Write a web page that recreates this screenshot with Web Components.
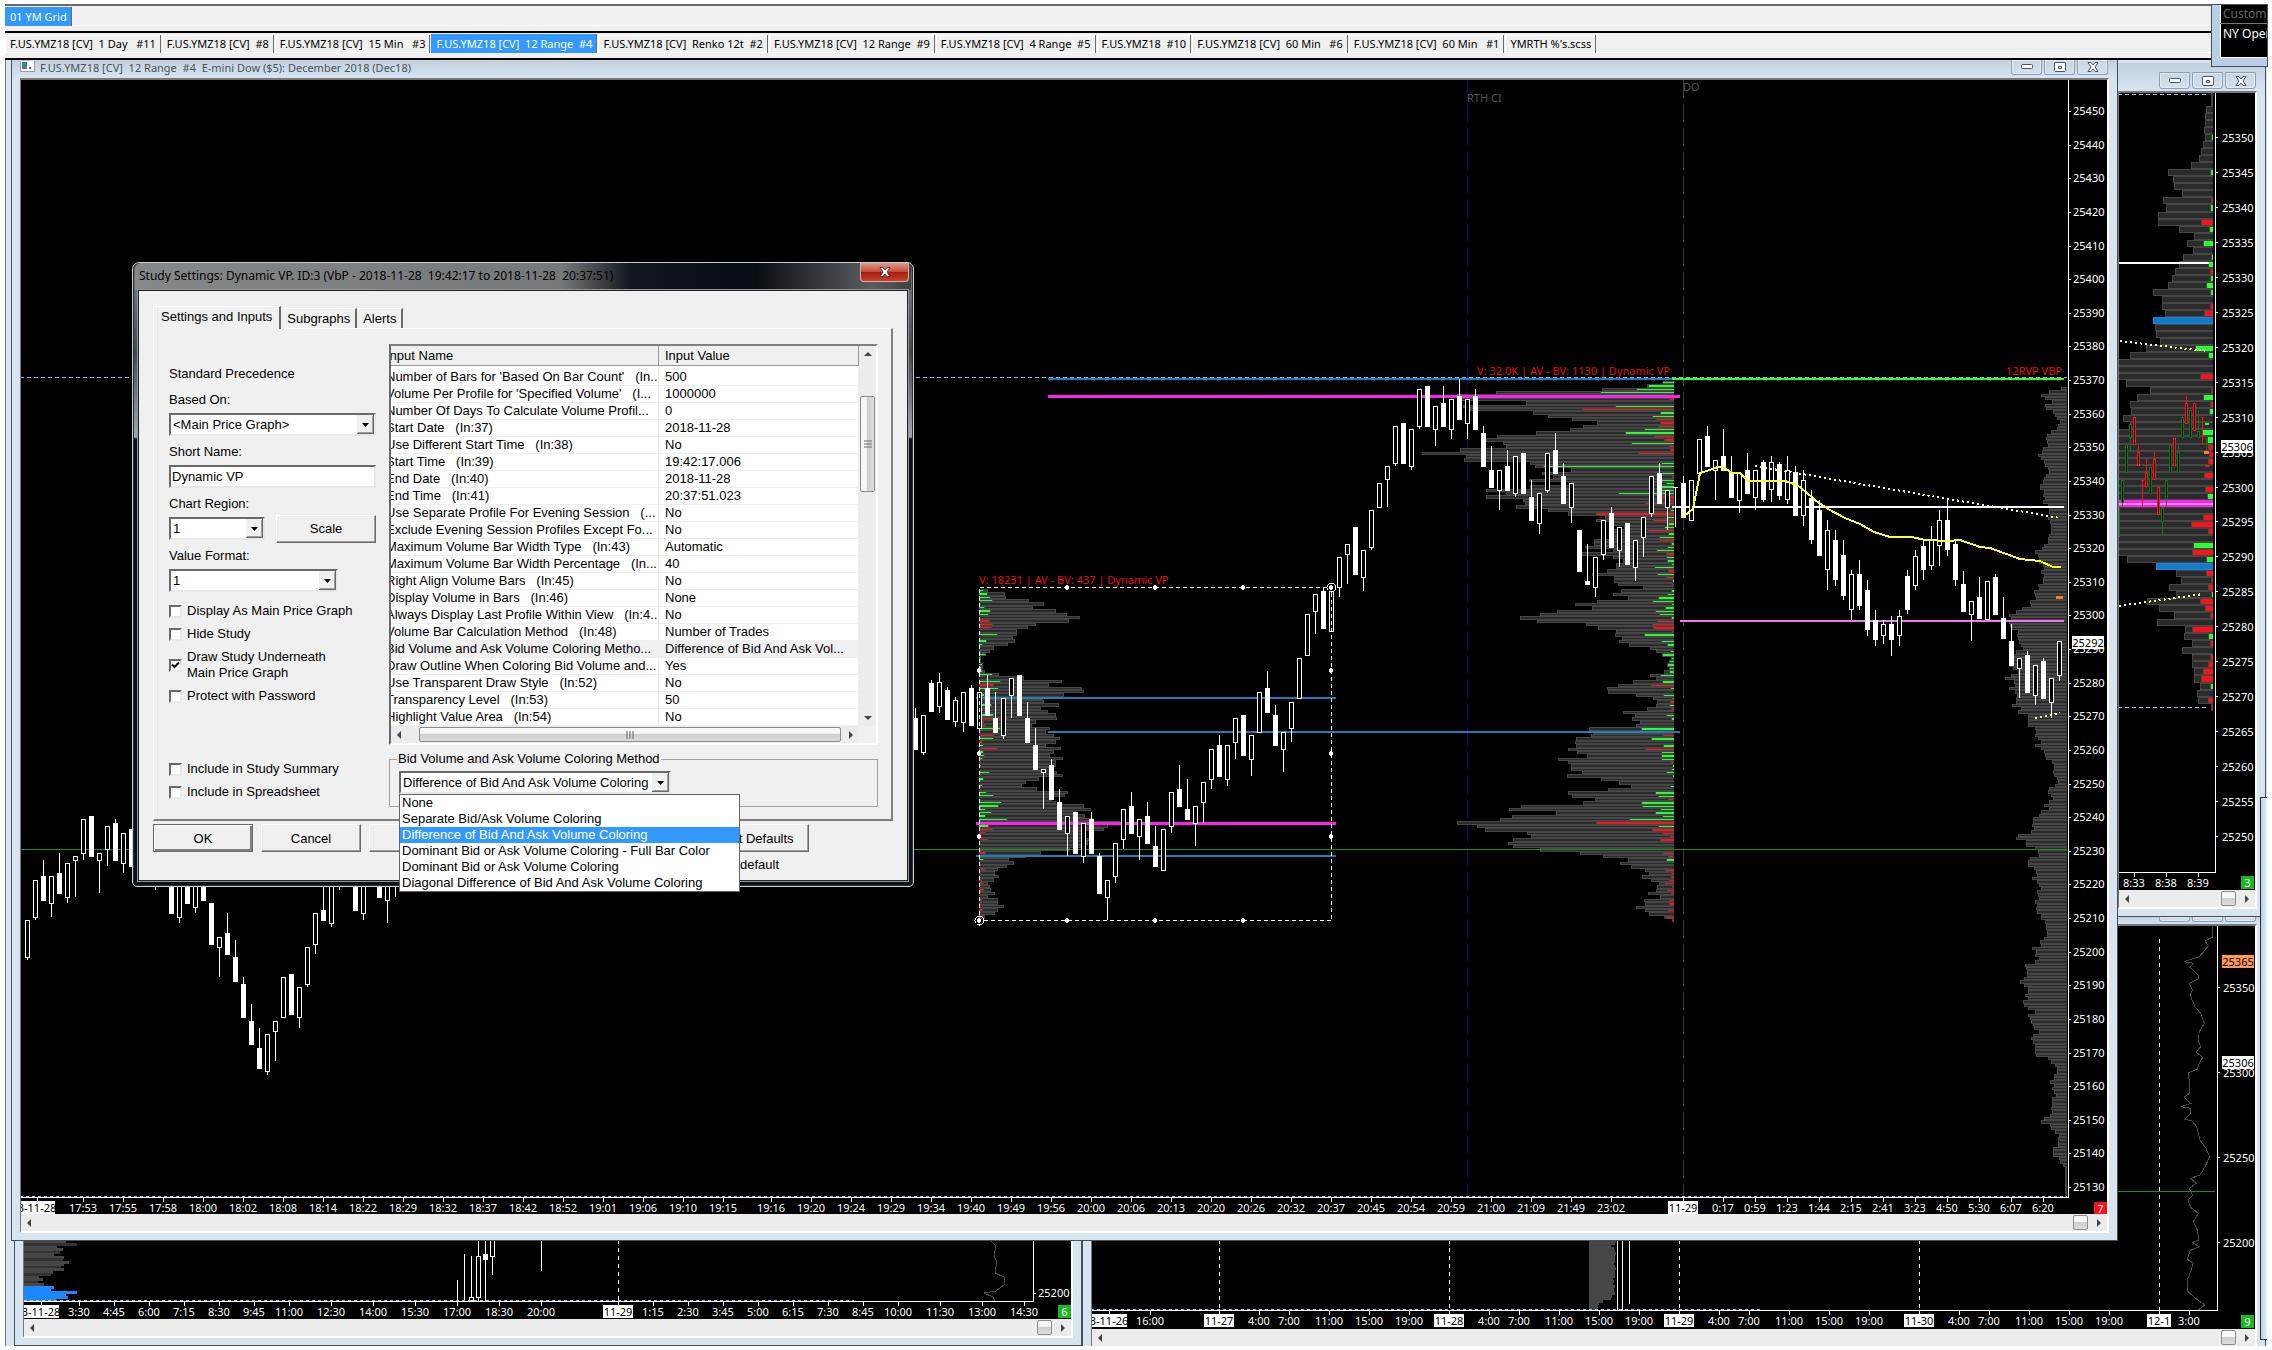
<!DOCTYPE html>
<html lang="en">
<head>
<meta charset="utf-8">
<title>01 YM Grid</title>
<style>
html,body{margin:0;height:100%;background:#fff}
body{font:11px "Noto Sans","Open Sans",sans-serif;overflow:hidden}
</style>
</head>
<body>
<trading-desktop></trading-desktop>
<script>
/* ---------- chart data ---------- */
/* Volume profile rows: "length/delta"; delta > 0 is ask heavy, < 0 is bid heavy. */
const PROFILE_A = `28/11 79/25 82/34 151/40 196/4 163/16 232/34 265/28 304/4 271/-31 172/-40 148/-37 115/0 115/55 103/0 109/22 88/10 46/0 34/4 22/19 7/4 6/4 12/10 12/7 19/10 61/40 136/0 250/64 211/-43 310/58 316/0 256/16 192/0 196/0 241/37 187/-16 208/0 232/43 235/-84 172/-13 160/-19 214/64 202/-4 226/-43 244/43 232/-10 202/13 247/-55 226/13 214/16 253/10 232/-4 232/-7 226/0 235/31 253/-4 181/13 142/0 130/10 175/0 268/22 259/43 218/0 232/67 316/58 337/19 292/37 319/19 346/85 424/0 388/28 376/-40 322/-19 312/0 332/-25 328/0 307/0 272/0 187/-19 142/0 91/13 106/0 85/0 58/-16 49/-4 61/0 46/-7 28/-13 34/0 37/-13 49/0 28/0 58/-7 58/-7 76/0 58/-10 49/0 19/-12`;
const PROFILE_B = `32/32 80/74 215/112 533/220 652/0 652/-12 443/0 632/174 618/-274 422/39 377/63 305/-52 230/-39 272/-46 311/87 413/144 530/-57 564/-27 512/127 503/-12 641/-9 755/-105 623/0 629/0 431/36 416/390 308/0 395/42 362/-3 434/37 308/21 432/37 563/37 503/165 563/-37 452/-12 446/-85 473/0 377/9 317/-231 206/18 233/-60 182/15 149/27 182/-75 192/15 182/42 239/-42 239/6 266/18 182/51 282/-21 182/21 152/18 173/6 173/57 200/-15 245/48 179/-21 179/3 167/-3 92/0 158/6 182/18 137/45 230/63 296/6 245/24 350/54 401/42 461/6 410/-48 263/-63 227/-60 173/-3 176/87 155/0 164/36 134/18 71/0 53/9 36/33 9/6 14/12 20/18 14/12 29/12 71/39 53/0 122/33 167/-66 200/9 197/0 113/30 62/3 50/-9 53/12 80/-7 152/0 116/21 125/6 101/0 113/0 254/96 242/0 248/-30 293/66 296/0 293/30 317/-84 290/36 260/36 347/36 317/-6 308/3 308/6 275/21 320/3 218/0 164/0 128/9 197/0 317/54 305/45 236/-15 272/96 458/93 494/39 353/54 485/33 521/132 650/-230 590/45 566/-63 440/-33 428/-9 482/-39 497/0 482/0 402/0 281/-30 212/-15 137/21 161/0 128/0 86/-24 74/-6 95/-6 68/-12 44/-24 50/-3 53/-19 77/-6 41/0 89/-12 86/-12 113/0 86/-15 74/0 29/-21 6/-3`;
/* Left edges of the session profile beside the price axis. */
const PROFILE_C = `301 265 241 253 274 253 256 277 283 289 298 292 289 271 259 256 259 262 247 245 232 240 250 252 262 265 255 250 248 238 238 250 248 253 248 262 265 265 268 262 268 271 272 271 265 262 262 250 245 223 232 235 235 247 250 241 250 247 247 232 235 220 223 226 208 211 184 166 145 150 145 148 150 172 169 172 175 181 187 166 154 150 157 145 157 172 151 133 160 163 145 163 169 166 166 154 181 172 202 202 202 202 223 226 223 232 241 223 241 250 253 256 274 280 280 277 280 289 292 283 265 262 271 277 265 250 265 241 235 217 217 214 220 211 173 166 196 196 223 232 235 208 202 202 220 226 229 214 229 235 241 229 232 235 223 229 226 229 241 241 253 256 256 259 259 250 238 241 214 226 223 235 223 193 196 199 199 190 178 190 202 202 193 202 187 190 202 223 202 208 211 217 220 235 217 211 217 223 223 223 226 262 271 283 289 289 280 280 268 280 274 280 286 274 274 274 271 274 268 250 241 268 271 283 295 292 292 292 277 277 277 295 298 307 313 313 313 313 313 313 313 313 313`;
const PROFILE_D = `6/0 6/0 21/0 24/0 24/0 27/0 24/4 30/0 36/0 42/0 66/0 135/7 120/0 117/0 93/0 150/-4 141/7 165/0 165/-34 102/10 57/0 78/28 60/0 90/4 102/13 114/-7 123/7 135/19 180/7 153/0 153/-7 144/-24 B180 174/0 171/0 159/0 201/52 249/13 290/0 290/0 290/-37 261/0 189/-4 228/28 249/-7 246/10 270/0 249/0 290/31 290/16 290/-13 290/-10 290/-13 290/0 290/-25 290/0 290/-22 290/16 M290 290/0 290/-28 290/-64 290/-13 290/0 290/58 290/-61 258/19 B171 111/-19 96/-4 132/-13 111/4 198/-37 162/-22 117/-7 168/0 84/-61 87/13 63/-7 93/0 63/-7 63/-13 57/-28 57/-34 39/7 48/0 45/-13 6/-4`;

/* Candles: kind, high, top, bottom, low. f = filled, h = hollow. "-" = no bar. */
const CANDLES = [
 {x:27, y:780, k:3, d:`h420,420,534,540 h300,300,414,420 f240,288,363,363 h288,288,372,411 f219,279,342,342 h249,249,354,369 h228,228,243,351 h117,117,222,240 f108,108,231,231 h219,219,243,339 h138,138,210,258 f117,129,243,243 h159,159,252,279 f147,147,261,261 - - l290,330,330,330 - f300,300,402,402 h300,300,414,429 f300,300,372,372 h300,300,384,399 f300,300,363,363 f369,369,495,495 h471,471,504,591 f399,459,525,525 f480,531,606,606 f591,612,714,714 f672,723,795,795 f744,804,867,867 h762,762,876,885 h723,723,756,843 h591,591,714,714 f582,582,705,705 h621,621,714,744 h501,501,615,621 h399,399,495,522 f320,390,423,423 h300,300,432,441 l300,330,330,330 - f300,300,393,393 h300,300,402,420 - f300,300,354,354 h300,300,363,429 l300,351,351,351`},
 {x:915, y:540, k:3, d:`f504,534,630,630 h525,525,639,645 f420,430,516,516 h400,426,500,520 f440,450,540,540 h470,480,546,560 h457,457,549,576 f435,444,558,558 h457,457,567,567 f405,444,528,528 f456,534,579,579 h474,474,588,597 h414,414,468,534 f405,405,528,528 f486,534,609,609 f564,615,690,690 h687,687,699,807 f657,675,780,780 f747,786,870,870 h828,828,882,948 f816,816,942,942 h849,849,951,969 f816,837,942,942 f939,948,1062,1062 h1020,1020,1074,1140 h909,909,1011,1029 h807,807,900,927 f756,798,882,882 h837,837,891,960 f786,828,912,912 f858,918,981,981 h867,867,993,993 h756,756,861,879 f675,747,801,801 f717,807,840,840 h798,798,852,918 h726,726,789,849 h627,627,720,747 f585,615,711,711 h615,615,720,738 h534,534,609,657 f525,525,648,648 h585,585,660,708 h456,456,579,579 f393,444,519,519 f495,525,618,618 h576,576,630,696 h486,486,567,606 h354,354,477,477 h222,222,348,348 h162,162,216,282 f141,153,267,267 h153,153,276,276 h51,51,144,171 h12,12,45,132 f-40,-40,105,105 h30,30,114,153 h-90,-90,24,30`},
 {x:1379, y:340, k:2.613, d:`h374,374,438,438 h329,329,367,436 h225,225,324,328 f217,217,324,324 h233,233,331,340 h128,128,227,233 f120,120,227,227 h172,172,235,277 f120,165,227,227 h154,154,235,259 f102,146,209,209 h154,154,220,259 f128,146,235,235 f225,243,332,332 f277,340,387,387 h340,340,395,444 f287,329,395,395 h303,303,402,409 f295,295,402,402 f366,410,473,473 h400,400,481,507 h295,295,395,400 f243,287,350,350 f321,355,429,429 h374,374,438,478 f497,497,606,606 f533,630,640,640 h567,567,648,672 h470,470,562,575 f436,452,544,544 h489,489,551,593 f478,478,588,588 h523,523,596,630 h463,463,517,567 h355,355,455,462 f321,348,429,429 h392,392,438,497 f385,385,387,489 f355,374,465,465 h366,366,473,473 h259,259,350,350 f225,251,332,332 h314,314,342,418 f233,303,342,342 f303,345,413,413 h348,348,420,452 f295,340,402,402 h340,340,412,444`},
 {x:1763, y:340, k:1, d:`f120,122,160,162 h116,122,150,162 f122,124,156,160 h116,130,160,164 f126,132,176,176 h130,140,176,186 f150,158,200,204 f160,170,216,216 h180,190,230,250 f190,200,240,246 f200,215,256,260 h230,234,270,280 f220,234,266,270 f240,250,290,296 f270,280,300,306 h280,284,296,304 f276,284,300,316 h270,276,296,306 f230,236,270,274 h210,216,246,250 f200,206,230,240 h186,200,226,230 h170,180,206,226 f160,180,210,216 f200,204,240,246`},
 {x:1963, y:430, k:3, d:`f423,462,546,546 h513,513,555,633 f441,501,567,567 h453,453,570,570 f432,441,555,555 f501,564,627,627 f582,633,708,708 h684,684,717,804 f663,675,789,789 h705,705,798,825 f684,693,807,807 h744,744,819,864 h633,633,738,753`}
];
const TICK_CANDLES = `475g235,235,320,320 487g150,150,220,232 499g46,46,130,130 511g-18,-18,25,66 523r-38,-38,46,46 535r45,67,108,108 547r150,150,152,232 559r88,130,172,172 571g110,110,192,192 583r67,88,150,150 595r172,172,256,256 607g235,235,277,318 619g150,150,210,232 631g46,46,130,130 643r25,25,108,108 655g46,67,130,130 667g-38,-38,25,25 679r-102,-80,-18,-18 691g-60,-60,25,25 703r-80,-80,3,3 715g-60,3,25,25 727r-40,-40,-38,46 739g25,25,27,62`;

/* ---------- svg helpers ---------- */
const rect=(x,y,w,h,c,o='')=>`<rect x="${x}" y="${y}" width="${w}" height="${h}" fill="${c}" ${o}/>`;
const hline=(x1,x2,y,h,c)=>rect(x1,y,x2-x1,h,c);
const dash=(x1,y1,x2,y2,c,d,w=1)=>`<path d="M${x1} ${y1}L${x2} ${y2}" stroke="${c}" stroke-width="${w}" stroke-dasharray="${d}"/>`;
const text=(x,y,s,c='#fff',a='start')=>`<text x="${x}" y="${y}" fill="${c}" text-anchor="${a}">${s}</text>`;
const tag=(x,y,w,s,bg='#fff',c='#000')=>rect(x,y,w,13,bg)+text(x+w/2,y+11,s,c,'middle');

function profile(rows,base,dir,y0,pitch,unit=3){
  let out='';
  rows.split(' ').forEach((r,i)=>{
    const special=/^[BM]/.test(r);
    const [w,d=0]=r.replace(/^[BM]/,'').split('/').map(Number);
    const y=Math.round(y0+i*pitch), h=Math.round(y0+(i+1)*pitch)-y, W=Math.max(1,Math.round(w/unit));
    const at=(len)=>dir>0?base:base-len;
    if(special){
      const m=r[0]==='M';
      out+=rect(at(W),y,W,h,m?'#ff20f0':'#1a80f0')+rect(at(W-1),y+(m?3:1),W-1,m?2:h-2,m?'#ff90f8':'#147cc4');
      return;
    }
    out+=rect(at(W),y,W,h,'#464646');
    if(W>2) out+=rect(dir>0?base:base-W+1,y+1,W-1,h-2,'#2b2b2b');
    if(d){const D=Math.max(1,Math.round(Math.abs(d)/unit));
      out+=rect(at(D+1),y+1,D+1,h-2,'#464646')+rect(at(D),y+1,D,h-2,d>0?'#28ff32':'#ff1018');}
  });
  return out;
}
function candle(x,hi,t,b,lo,kind,col='#fff',w=5){
  const c=Math.floor(w/2);
  let o=rect(x,hi,1,Math.max(1,lo-hi),col);
  if(kind==='f') o+=rect(x-c,t,w,Math.max(1,b-t),col);
  if(kind==='h') o+=`<rect x="${x-c+.5}" y="${t+.5}" width="${w-1}" height="${Math.max(1,b-t-1)}" fill="#000" stroke="${col}"/>`;
  return o;
}
function xAxis(y,labels,labelY){
  return labels.map(([x,s,w])=>rect(x,y,1,4,'#fff')+(w?tag(x-w/2,labelY-11,w,s):text(x,labelY,s,'#fff','middle'))).join('');
}
const poly=(pts,c,w=1)=>`<polyline points="${pts}" fill="none" stroke="${c}" stroke-width="${w}"/>`;
const scaled=(pts,x,y)=>pts.split(' ').map(p=>{const[a,b]=p.split(',');return (x+a/3).toFixed(1)+','+(y+b/3).toFixed(1)}).join(' ');

/* ---------- the four charts ---------- */
function rangeChart(){
  let o='';
  o+=dash(20,377.5,2067,377.5,'#8fb4e8','4 3');
  o+=dash(1467.5,80,1467.5,1197,'#0a0a70','18 6')+dash(1683.5,80,1683.5,1197,'#3a3a3a','18 6');
  o+=text(1467,102,'RTH CI','#555')+text(1683,91,'DO','#555');
  o+=profile(PROFILE_A,979,1,589,3.3625)+profile(PROFILE_B,1674,-1,381,3.3625);
  const c=PROFILE_C.split(' ').map(v=>319-v+'/0'), n=c.length;
  o+=profile(c.join(' '),2067,-1,387,(1197-387)/n);
  o+=hline(1048,1677,378,2,'#1a80c0')+hline(976,1336,697,2,'#1a80c0')+hline(1048,1680,731,2,'#1a80c0')+hline(976,1336,855,2,'#1a80c0');
  o+=hline(1048,1680,395,3,'#ff20f0')+hline(976,1336,822,3,'#ff20f0');
  o+=hline(20,2067,849,1,'#1c8c1c');
  o+=hline(1672,2064,378,2,'#28ff32')+hline(1672,2064,506,2,'#fff')+hline(1680,2064,620,2,'#f078f0');
  for(const s of CANDLES) s.d.split(' ').forEach((q,i)=>{
    if(q==='-')return;
    const [hi,t,b,lo]=q.slice(1).split(',').map(v=>Math.round(s.y+v/s.k));
    o+=candle(s.x+8*i,hi,t,b,lo,q[0]);
  });
  o+=poly('1683,517 1693,509 1700,473 1710,470 1718,467 1723,467 1732,473 1740,473 1748,481 1785,481 1797,485 1806,492 1815,500 1828,509 1845,518 1860,524 1874,532 1890,537 1912,537 1925,540 1948,541 1960,540 1980,547 1990,548 2020,559 2040,561 2053,567 2061,567','#ffff30',2);
  o+=dash(1755,466,2060,518,'#ffff90','2 3',2)+dash(2035,718,2060,713,'#ffff90','2 3',2);
  o+=`<rect x="979.5" y="587.5" width="352" height="333" fill="none" stroke="#fff" stroke-dasharray="4 3"/>`;
  for(const[x,y]of[[1067,587],[1155,587],[1243,587],[1067,920],[1155,920],[1243,920],[979,670],[979,753],[979,836],[1331,670],[1331,753],[1331,836],[979,920],[1331,587]])o+=rect(x-2,y-1,4,3,'#fff')+rect(x-1,y-2,2,5,'#fff');
  for(const[x,y]of[[979.5,920.5],[1331.5,587.5]])o+=`<circle cx="${x}" cy="${y}" r="4.5" fill="none" stroke="#fff"/>`;
  o+=text(979,584,'V: 18231 | AV - BV: 437 | Dynamic VP','#e80c18')+text(1670,375,'V: 32.0K | AV - BV: 1130 | Dynamic VP','#e80c18','end')+text(2062,375,'12RVP VBP','#e80c18','end');
  o+=rect(2056,596,7,3,'#ff7f20');
  o+=dash(20,1196.5,2067,1196.5,'#a8c4f0','3 3')+rect(20,1197,2049,1,'#fff')+rect(2068,80,1,1118,'#fff');
  for(let p=25450,i=0;p>=25130;p-=10,i++){const y=Math.round(111+i*33.625);o+=rect(2069,y,2,1,'#fff')+text(2073,y+4,p)}
  o+=tag(2072,636,32,'25292');
  const L=[[37,'3-11-28',36]];
  '17:53 17:55 17:58 18:00 18:02 18:08 18:14 18:22 18:29 18:32 18:37 18:42 18:52 19:01 19:06 19:10 19:15'.split(' ').forEach((s,i)=>L.push([83+40*i,s]));
  '19:16 19:20 19:24 19:29 19:34 19:40 19:49 19:56 20:00 20:06 20:13 20:20 20:26 20:32 20:37 20:45 20:54 20:59 21:00 21:09 21:49 23:02'.split(' ').forEach((s,i)=>L.push([771+40*i,s]));
  L.push([1683,'11-29',30]);
  '0:17 0:59 1:23 1:44 2:15 2:41 3:23 4:50 5:30 6:07 6:20'.split(' ').forEach((s,i)=>L.push([1723+32*i,s]));
  o+=xAxis(1198,L,1212)+tag(2094,1202,13,'7','#ff1018','#fff');
  return o;
}
function tickChart(){
  let o=dash(2118,94.5,2206,94.5,'#a8c0f0','4 3')+profile(PROFILE_D,2213,-1,92,7.03);
  o+=dash(2118,707.5,2206,707.5,'#a8c0f0','4 3')+hline(2118,2209,262,2,'#fff');
  TICK_CANDLES.split(' ').forEach(q=>{
    const m=q.match(/^(\d+)([gr])(.*)/),[hi,t,b,lo]=m[3].split(',').map(v=>Math.round(430+v/3)),col=m[2]==='g'?'#0c7a10':'#ff1018';
    o+=b-t<3?rect(1960+Math.round(m[1]/3),hi,1,lo-hi,col)+rect(1959+Math.round(m[1]/3),hi,3,1,col):candle(1960+Math.round(m[1]/3),hi,t,b,lo,'h',col,3);
  });
  o+=dash(2120,341,2205,351,'#ffff90','2 3',2)+dash(2119,606,2203,594,'#ffff90','2 3',2);
  o+=rect(2204,451,5,3,'#ff7f20')+rect(2205,465,4,2,'#ff1018')+rect(2205,423,4,2,'#28ff32');
  o+=rect(2215,93,1,780,'#fff')+rect(2118,872,98,1,'#fff');
  for(let p=25350,i=0;p>=25250;p-=5,i++){const y=Math.round(138+i*34.95);o+=rect(2216,y-1,2,1,'#fff')+text(2222,y+4,p)}
  o+=tag(2221,440,32,'25306')+xAxis(873,[[2134,'8:33'],[2166,'8:38'],[2198,'8:39']],887)+tag(2241,876,13,'3','#18b820','#fff');
  return o;
}
function smallChart(){
  let o='';
  const px=v=>Math.round(v/1.4);
  '92 108 80 88 84 75 90 88 97 90 86 90 74 72 55 60 53 62'.split(' ').forEach((v,i)=>{o+=rect(24,1241+i*2.5|0,px(v)-24,3,i%3==1?'#333':'#464646')});
  '75 72 108 92 95 78'.split(' ').forEach((v,i)=>{o+=rect(24,1286+i*2.5|0,px(v)-24,3,'#1a88ff')});
  const v=[[457,1280,1301],[464,1254,1301],[471,1256,1301],[478,1240,1301],[485,1240,1301],[492,1240,1275],[541,1240,1271]];
  v.forEach(([x,a,b])=>o+=rect(x,a,1,b-a,'#fff'));
  o+=candle(478,1256,1256,1298,1298,'h')+candle(471,1297,1297,1301,1301,'h')+rect(483,1254,5,6,'#fff')+candle(492,1240,1240,1257,1257,'h');
  o+=dash(618.5,1240,618.5,1301,'#fff','4 4');
  o+=poly('991,1241 996,1246 994,1256 997,1262 995,1273 1004,1277 1005,1284 996,1291 984,1293 993,1297 995,1301','#484848');
  o+=dash(24,1300.5,854,1300.5,'#a8c4f0','3 3')+rect(24,1301,1010,1,'#fff')+rect(1033,1240,1,62,'#fff')+rect(1034,1293,2,1,'#fff')+text(1038,1297,'25200');
  const L=[[41,'3-11-28',35]];
  '3:30 4:45 6:00 7:15 8:30 9:45 11:00'.split(' ').forEach((s,i)=>L.push([79+35*i,s]));
  '12:30 14:00 15:30 17:00 18:30 20:00'.split(' ').forEach((s,i)=>L.push([331+42*i,s]));
  L.push([618,'11-29',30]);
  '1:15 2:30 3:45 5:00 6:15 7:30 8:45 10:00'.split(' ').forEach((s,i)=>L.push([653+35*i,s]));
  '11:30 13:00 14:30'.split(' ').forEach((s,i)=>L.push([940+42*i,s]));
  return o+xAxis(1302,L,1316)+tag(1058,1305,13,'6','#18b820','#fff');
}
function dayChart(){
  let o='';
  for(const x of[1219,1449,1679,1919])o+=dash(x+.5,1240,x+.5,1310,'#fff','4 4');
  o+=dash(2159.5,939,2159.5,1310,'#fff','4 4');
  [27,26,22,25,26,27,26,26,26,25,26,27,26,26,26,24,25,24,26,25,25,26,23,22,14,10,9,8].forEach((w,i)=>o+=rect(1589,1240+i*2.5|0,w,3,'#464646'));
  o+=rect(1617,1240,1,70,'#fff')+rect(1622,1240,1,70,'#fff')+rect(1629,1240,1,64,'#fff');
  o+=poly(scaled('757,140 757,172 747,176 735,183 745,197 735,210 718,230 700,236 673,245 700,250 690,262 715,285 715,296 688,310 697,330 690,345 705,380 722,400 733,430 718,455 714,480 722,500 708,516 728,532 718,550 712,568 685,578 690,620 688,640 672,652 680,660 692,670 662,680 692,685 692,700 675,718 695,722 710,740 720,780 738,805 749,830 735,860 720,885 693,895 708,910 688,925 698,945 684,960 692,982 715,1000 700,1025 712,1050 716,1080 697,1087 718,1100 690,1112 682,1138 700,1150 692,1175 682,1200 684,1235 710,1258 735,1275 715,1290',1960,880),'#484848');
  o+=hline(2118,2215,1191,1,'#1c8c1c');
  o+=dash(1091,1309.5,1760,1309.5,'#a8c4f0','3 3')+rect(1091,1310,1126,1,'#fff')+rect(2217,926,1,385,'#fff');
  [[25350,988],[25300,1073],[25250,1158],[25200,1243]].forEach(([p,y])=>o+=rect(2218,y-1,2,1,'#fff')+text(2223,y+4,p));
  o+=tag(2222,955,32,'25365','#ff9a50')+tag(2222,1056,32,'25306');
  const L=[[1109,'3-11-26',36],[1150,'16:00'],[1219,'11-27',30],[1449,'11-28',30],[1679,'11-29',30],[1919,'11-30',30],[2159,'12-1',24],[2189,'3:00']];
  for(const d of[1219,1449,1679,1919])[[40,'4:00'],[70,'7:00'],[110,'11:00'],[150,'15:00'],[190,'19:00']].forEach(([k,s])=>L.push([d+k,s]));
  return o+xAxis(1311,L,1325)+tag(2241,1315,13,'9','#18b820','#fff');
}
const CHARTS={range:rangeChart,tick:tickChart,small:smallChart,day:dayChart};

/* ---------- elements ---------- */
const define=(name,html,setup)=>customElements.define(name,class extends HTMLElement{
  constructor(){super();const t=document.createElement('template');t.innerHTML=html;this.attachShadow({mode:'open'}).append(t.content.cloneNode(true));}
  connectedCallback(){setup&&!this.ready&&(this.ready=true,setup(this,this.shadowRoot));}
});

/* "origin" is the desktop point that the chart's top left corner shows. */
define('price-chart',`<style>:host{display:block;flex:1;min-height:0;background:#000;overflow:hidden}
svg{display:block;width:100%;height:100%;font:11px "Noto Sans","Open Sans",sans-serif}text{white-space:pre}</style><svg shape-rendering="crispEdges"><g></g></svg>`,
(el,r)=>{const g=r.querySelector('g'),[x,y]=el.getAttribute('origin').split(' ');g.setAttribute('transform',`translate(${-x} ${-y})`);g.innerHTML=CHARTS[el.getAttribute('kind')]();});

define('tab-strip',`<style>:host{display:flex;height:25px;box-sizing:border-box;background:#f0f0f0;border-bottom:5px solid #f0f0f0;box-shadow:inset 0 -1px #fff;padding-top:2px}
a{display:block;color:#000;text-decoration:none;white-space:pre;line-height:17px;padding:0 4px 0 5px;border-right:1px solid #696969;margin-right:1px;box-shadow:inset 1px 1px #fff}
a.on{background:#3399ff;color:#fff;box-shadow:none;margin-top:-1px;height:19px;line-height:19px}</style>`,
(el,r)=>{for(const s of el.getAttribute('tabs').split('|')){const a=document.createElement('a');a.href='#';a.textContent=s.replace('*','');if(s[0]==='*')a.className='on';r.append(a);}});

define('h-scrollbar',`<style>:host{display:flex;flex:none;height:17px;background:#ececec;align-items:center;padding:0 6px}
i{flex:1}b{width:13px;height:13px;border:1px solid #8c8c8c;border-radius:2px;background:linear-gradient(#f6f6f6 45%,#cfcfd0 50%,#dcdcdc);margin-right:9px}
svg{display:block}</style>
<svg width="4" height="8"><path d="M4 0v8L0 4z" fill="#444"/></svg><i></i><b></b><svg width="4" height="8"><path d="M0 0v8l4-4z" fill="#444"/></svg>`);

define('chart-window',`<style>
:host{position:absolute;box-sizing:border-box;display:flex;flex-direction:column;background:#d7e4f2;border:1px solid #4a4f55;border-top:0;padding:0 8px 7px 8px}
header{display:flex;flex:none;height:var(--bar,18px);color:#4c5258;background:linear-gradient(#c2d0de,#d7e4f2);margin:0 -8px;padding:0 9px 0 8px;align-items:flex-start;line-height:15px;white-space:pre;gap:5px;overflow:hidden}
header span{flex:1}.b{display:flex;gap:2px}
button{width:31px;height:var(--btn,15px);margin-top:var(--btop,0);padding:0;border:1px solid #8fa0b4;border-top-width:var(--bt,0);border-radius:0 0 3px 3px;background:linear-gradient(#c8d5e3,#d4e0ee);box-shadow:inset 0 0 0 1px #dfe9f4;display:flex;align-items:center;justify-content:center}
.ic{margin-top:1px;flex:none}
section{flex:1;min-height:0;display:flex;flex-direction:column;border:solid;border-width:2px 2px 2px 1px;border-color:#777 #fff #fff #777}
:host([cut]) .ic,:host([bare]) header,:host([tucked]) button svg{display:none}
</style>
<header><svg class="ic" width="15" height="11"><path d="M0 0h15v11H0z" fill="#fff"/><path d="M0 0h1v11H0zM14 0h1v11h-1zM0 10h15v1H0z" fill="#99a"/><path d="M2 1h5v7H2z" fill="#3b8a78"/><path d="M9 6h2v2H9z" fill="#56a"/></svg><span></span><div class="b">
<button aria-label="Minimize"><svg width="12" height="6"><rect x=".5" y=".5" width="11" height="4" rx="1" fill="#fff" stroke="#4a5464"/></svg></button>
<button aria-label="Restore"><svg width="12" height="10"><rect x=".5" y=".5" width="11" height="9" rx="1" fill="#fff" stroke="#4a5464"/><path d="M4.500 4.500h3v2h-3z" fill="#c8d5e3" stroke="#4a5464"/></svg></button>
<button aria-label="Close"><svg width="12" height="10"><path d="M1 .5h3l2 2.500 2-2.500h3L8 5l3 4.500H8L6 7 4 9.500H1L4 5z" fill="#fff" stroke="#4a5464"/></svg></button></div></header>
<section><slot></slot><h-scrollbar></h-scrollbar></section>`,
(el,r)=>{r.querySelector('span').textContent=el.getAttribute('caption')||'';});

define('news-panel',`<style>:host{display:block;box-sizing:border-box;position:absolute;border:solid #b9cfe8;border-width:0 0 8px 8px;outline:1px solid #46505c;background:#000;color:#fff;font-size:12px;overflow:hidden;white-space:nowrap;box-shadow:inset 1px -1px #fff}
div{padding-left:3px;line-height:18px;height:18px;color:#666;border-bottom:1px solid #777}p{margin:0;padding-left:3px;line-height:20px}</style><div>Custom</div><p>NY Oper</p>`);

define('combo-box',`<style>:host{display:block;height:23px}
select{appearance:none;width:100%;height:100%;box-sizing:border-box;margin:0;font:13px "Liberation Sans",Arial,sans-serif;color:#000;border:2px solid;border-color:#696969 #e8e8e8 #e8e8e8 #696969;border-radius:0;padding:0 18px 0 2px;background:#fff;background-clip:padding-box}
div{position:relative;height:100%}
svg{position:absolute;right:2px;top:2px;pointer-events:none}</style><div><select></select>
<svg width="17" height="19"><path d="M0 0h17v19H0z" fill="#f0f0f0"/><path d="M16 0h1v19H0v-1h16z" fill="#696969"/><path d="M15 1h1v17H1v-1h14z" fill="#a0a0a0"/><path d="M5 8h7l-3.500 4z"/></svg></div>`,
(el,r)=>{const s=r.querySelector('select');s.setAttribute('aria-label',el.getAttribute('label'));s.innerHTML='<option></option>';s.firstChild.textContent=el.getAttribute('value');});

define('tick-box',`<style>:host{display:block}label{display:flex;align-items:center;gap:5px;line-height:16px}
input{appearance:none;flex:none;width:13px;height:13px;margin:0;box-sizing:border-box;background:#fff;border:2px solid;border-color:#696969 #e8e8e8 #e8e8e8 #696969}
input:checked{background:#fff url('data:image/svg+xml,<svg xmlns="http://www.w3.org/2000/svg" width="9" height="9"><path d="M1 3.500l2.500 2.500L8 1.500" fill="none" stroke="black" stroke-width="2"/></svg>') center no-repeat}</style>
<label><input type="checkbox"><span><slot></slot></span></label>`,(el,r)=>{r.querySelector('input').checked=el.hasAttribute('checked')});

define('push-button',`<style>:host{display:block;width:100px;height:28px}button{font:inherit;color:#000;width:100%;height:100%;box-sizing:border-box;padding:0;background:#f0f0f0;border:1px solid;border-color:#fff #696969 #696969 #fff;box-shadow:inset -1px -1px #a0a0a0}
:host([primary]) button{border-color:#696969;box-shadow:inset 1px 1px #fff,inset -2px -2px #808080}</style><button><slot></slot></button>`);

const INPUTS=`Number of Bars for 'Based On Bar Count'   (In...|500
Volume Per Profile for 'Specified Volume'   (I...|1000000
Number Of Days To Calculate Volume Profil...|0
Start Date   (In:37)|2018-11-28
Use Different Start Time   (In:38)|No
Start Time   (In:39)|19:42:17.006
End Date   (In:40)|2018-11-28
End Time   (In:41)|20:37:51.023
Use Separate Profile For Evening Session   (...|No
Exclude Evening Session Profiles Except Fo...|No
Maximum Volume Bar Width Type   (In:43)|Automatic
Maximum Volume Bar Width Percentage   (In...|40
Right Align Volume Bars   (In:45)|No
Display Volume in Bars   (In:46)|None
Always Display Last Profile Within View   (In:4...|No
Volume Bar Calculation Method   (In:48)|Number of Trades
Bid Volume and Ask Volume Coloring Metho...|Difference of Bid And Ask Vol...
Draw Outline When Coloring Bid Volume and...|Yes
Use Transparent Draw Style   (In:52)|No
Transparency Level   (In:53)|50
Highlight Value Area   (In:54)|No`;

define('input-grid',`<style>
:host{display:grid;grid-template-columns:1fr 17px;grid-template-rows:auto 17px;box-sizing:border-box;border:2px solid;border-color:#808080 #fff #fff #696969;background:#f0f0f0}
.v{overflow:hidden;background:#fff}
table{border-collapse:separate;border-spacing:0;table-layout:fixed;width:calc(100% + 9px);margin-left:-9px;white-space:pre}
th{font-weight:400;text-align:left;background:#f0f0f0;height:19px;border-right:1px solid #999;border-bottom:1px solid #999}
th,td{padding:0 0 0 4px;overflow:hidden}td{height:16px;line-height:16px;border-bottom:1px solid #eee;border-right:1px solid #eee}
th+th,td+td{padding-left:6px}
col.n{width:277px}tbody:before{content:"";display:block;height:3px}
tr.sel td{background:#f0f0f0}
.vs,.hs{display:flex;align-items:center;justify-content:space-between;background:#ececec}.vs{flex-direction:column;padding:6px 0}.hs{padding:0 6px}
.vs{justify-content:flex-start}.vs:after{content:"";order:1;flex:1}.vs svg:last-child{order:2}
.t{border:1px solid #8c8c8c;border-radius:2px;box-sizing:border-box;display:flex;align-items:center;justify-content:center;background:linear-gradient(90deg,#f6f6f6 40%,#cfcfd0 50%,#dcdcdc)}
.vs .t{width:15px;height:96px;margin-top:40px}.hs .t{height:15px;flex:1;margin:0 8px 0 18px;background:linear-gradient(#f6f6f6 40%,#cfcfd0 50%,#dcdcdc)}
</style><div class="v"><table><colgroup><col class="n"><col></colgroup><thead><tr><th>Input Name</th><th>Input Value</th></tr></thead><tbody></tbody></table></div>
<div class="vs"><svg width="8" height="4"><path d="M0 4h8L4 0z" fill="#444"/></svg><div class="t"><svg width="8" height="8"><path d="M0 1h8M0 4h8M0 7h8" stroke="#666"/></svg></div><svg width="8" height="4"><path d="M0 0h8L4 4z" fill="#444"/></svg></div>
<div class="hs"><svg width="4" height="8"><path d="M4 0v8L0 4z" fill="#444"/></svg><div class="t"><svg width="8" height="8"><path d="M1 0v8M4 0v8M7 0v8" stroke="#666"/></svg></div><svg width="4" height="8"><path d="M0 0v8l4-4z" fill="#444"/></svg></div>`,
(el,r)=>{r.querySelector('tbody').innerHTML=INPUTS.split('\n').map((l,i)=>`<tr${i===16?' class="sel"':''}><td>${l.replace('|','</td><td>')}</td></tr>`).join('')});

define('study-dialog',`<style>
:host{position:absolute;box-sizing:border-box;width:782px;border:1px solid #c9ced2;border-radius:7px 7px 5px 5px;padding:0 5px 5px;background:linear-gradient(#55585b,#707478 20px,#45484b 90px,#a4a8ac 174px,#0b1016 176px);color:#000;font:13px "Liberation Sans",Arial,sans-serif;box-shadow:inset 0 0 0 1px #2a2e32}
.bar{height:27px;display:flex;justify-content:space-between;margin:0 -3px;background:linear-gradient(90deg,#85888b 0,#75787b 55%,#10161c 64%,#080d13 80%,#5a5d60 95%,#404346);border-radius:6px 6px 0 0}
h1{margin:0;padding-left:4px;font:12px/26px "Noto Sans","Open Sans",sans-serif;white-space:pre}
.x{width:49px;height:19px;border:1px solid #d8b0a8;border-top:0;border-radius:0 0 4px 4px;background:linear-gradient(#d89a8c,#c4503c 48%,#a81c0c 52%,#c8402c);padding:0;margin-right:2px}
.c{background:#f0f0f0;border:1px solid #222;box-shadow:0 0 0 1px #90959a;padding:15px 14px 0 14px}
nav{display:flex;align-items:flex-end;padding-left:1px}
nav a{color:#000;text-decoration:none;padding:0 5px 0 6px;line-height:19px;border-top:1px solid #fff;border-right:2px solid #696969}
nav a.on{border-left:1px solid #fff;line-height:20px;padding:0 7px 2px 7px;margin:0 0 -1px -1px;background:#f0f0f0}
main{border:1px solid #fff;border-right:2px solid #808080;border-bottom:2px solid #808080;display:grid;grid-template-columns:208px 489px;gap:13px;padding:15px 14px 12px 14px}
.l{display:flex;flex-direction:column;padding:22px 0 0 1px}
.l label,.l p{margin:0;line-height:16px}
.f{display:flex;flex-direction:column;gap:5px;margin-top:8px}
.l p+.f{margin-top:10px}
.r{display:flex;justify-content:space-between;align-items:center;height:23px}
.f input{box-sizing:border-box;height:23px;width:100%;margin:0;font:inherit;padding:0 1px;border:2px solid;border-color:#696969 #e8e8e8 #e8e8e8 #696969;background:#fff}
.t{display:flex;flex-direction:column;gap:7px;margin-top:11px}
.t.s{margin-top:57px}
.w96{width:96px}.w169{width:169px}
fieldset{margin:6px 0 0;border:1px solid #a0a0a0;padding:1px 9px 12px;min-width:0;height:56px;box-sizing:border-box}
legend{padding:0 1px;line-height:16px;margin-left:-2px}
fieldset combo-box{width:272px;margin-top:3px}
.p{position:relative}
ul{position:absolute;z-index:2;left:0;top:23px;margin:0;padding:0;list-style:none;width:339px;border:1px solid #646464;background:#fff}
li{line-height:16px;padding-left:2px;white-space:nowrap}li[aria-selected=true]{background:#3399ff;color:#fff}
.o{display:flex;gap:8px;margin:3px 84px 0 0}.o push-button:last-child{width:116px;margin-left:auto}
footer{margin-right:114px;text-align:right;line-height:16px;padding:5px 0 7px}
</style>
<div class="bar"><h1>Study Settings: Dynamic VP. ID:3 (VbP - 2018-11-28  19:42:17 to 2018-11-28  20:37:51)</h1><button class="x" aria-label="Close"><svg width="12" height="10"><path d="M1 .5h3l2 2.500 2-2.500h3L8 5l3 4.500H8L6 7 4 9.500H1L4 5z" fill="#fff" stroke="#633"/></svg></button></div>
<div class="c">
<nav><a href="#" class="on">Settings and Inputs</a><a href="#">Subgraphs</a><a href="#">Alerts</a></nav>
<main>
<div class="l"><p>Standard Precedence</p>
<div class="f"><label>Based On:</label><combo-box label="Based On" value="&lt;Main Price Graph&gt;"></combo-box></div>
<div class="f"><label for="sn">Short Name:</label><input id="sn" value="Dynamic VP"></div>
<div class="f"><label>Chart Region:</label><div class="r"><combo-box class="w96" label="Chart Region" value="1"></combo-box><push-button>Scale</push-button></div></div>
<div class="f"><label>Value Format:</label><combo-box class="w169" label="Value Format" value="1"></combo-box></div>
<div class="t"><tick-box>Display As Main Price Graph</tick-box><tick-box>Hide Study</tick-box><tick-box checked>Draw Study Underneath<br>Main Price Graph</tick-box><tick-box>Protect with Password</tick-box></div>
<div class="t s"><tick-box>Include in Study Summary</tick-box><tick-box>Include in Spreadsheet</tick-box></div>
</div>
<div><input-grid></input-grid>
<fieldset><legend>Bid Volume and Ask Volume Coloring Method</legend><div class="p"><combo-box label="Bid Volume and Ask Volume Coloring Method" value="Difference of Bid And Ask Volume Coloring"></combo-box>
<ul role="listbox"><li role="option">None</li><li role="option">Separate Bid/Ask Volume Coloring</li><li role="option" aria-selected="true">Difference of Bid And Ask Volume Coloring</li><li role="option">Dominant Bid or Ask Volume Coloring - Full Bar Color</li><li role="option">Dominant Bid or Ask Volume Coloring</li><li role="option">Diagonal Difference of Bid And Ask Volume Coloring</li></ul></div></fieldset></div>
</main>
<div class="o"><push-button primary>OK</push-button><push-button>Cancel</push-button><push-button>Apply</push-button><push-button>Reset Defaults</push-button></div>
<footer>Use as default</footer>
</div>`);

define('trading-desktop',`<style>
:host{display:flex;flex-direction:column;box-sizing:border-box;height:100vh;padding:4px 5px;background:#fff}
.top{border-top:2px solid #696969;background:#000;margin-right:50px}
tab-strip+tab-strip{margin-top:2px}
.top{padding-bottom:2px}
.desk{flex:1;position:relative;overflow:hidden;background:#d7e4f2;border-left:1px solid #777}
.w7{left:5px;right:149px;top:0;bottom:105px}
.w3{left:2103px;right:1px;top:3px;bottom:429px;--bar:28px;--btop:9px;--btn:17px;--bt:1px}
.w9{left:1076px;right:1px;top:857px;bottom:-10px;--bar:7px;--btn:5px}
.w6{left:8px;width:1068px;top:1178px;bottom:0}
.edge{position:absolute;right:0;width:6px;top:737px;bottom:6px;border:1px solid #333;border-right:0;background:linear-gradient(90deg,#b5cde8,#e8f2fc)}
study-dialog{left:126px;top:202px}
news-panel{right:5px;top:5px;width:55px;height:61px}
</style>
<div class="top"><tab-strip tabs="*01 YM Grid"></tab-strip>
<tab-strip tabs="F.US.YMZ18 [CV]  1 Day   #11|F.US.YMZ18 [CV]  #8|F.US.YMZ18 [CV]  15 Min   #3|*F.US.YMZ18 [CV]  12 Range  #4|F.US.YMZ18 [CV]  Renko 12t  #2|F.US.YMZ18 [CV]  12 Range  #9|F.US.YMZ18 [CV]  4 Range  #5|F.US.YMZ18  #10|F.US.YMZ18 [CV]  60 Min   #6|F.US.YMZ18 [CV]  60 Min   #1|YMRTH %'s.scss"></tab-strip></div>
<div class="desk">
<chart-window class="w6" bare><price-chart kind="small" origin="24 1240"></price-chart></chart-window>
<chart-window class="w9" cut tucked><price-chart kind="day" origin="1092 926"></price-chart></chart-window>
<chart-window class="w3" cut><price-chart kind="tick" origin="2119 93"></price-chart></chart-window>
<chart-window class="w7" caption="F.US.YMZ18 [CV]  12 Range  #4  E-mini Dow ($5): December 2018 (Dec18)"><price-chart kind="range" origin="21 80"></price-chart></chart-window>
<div class="edge"></div>
<study-dialog></study-dialog>
</div>
<news-panel></news-panel>`);
</script>
</body>
</html>
